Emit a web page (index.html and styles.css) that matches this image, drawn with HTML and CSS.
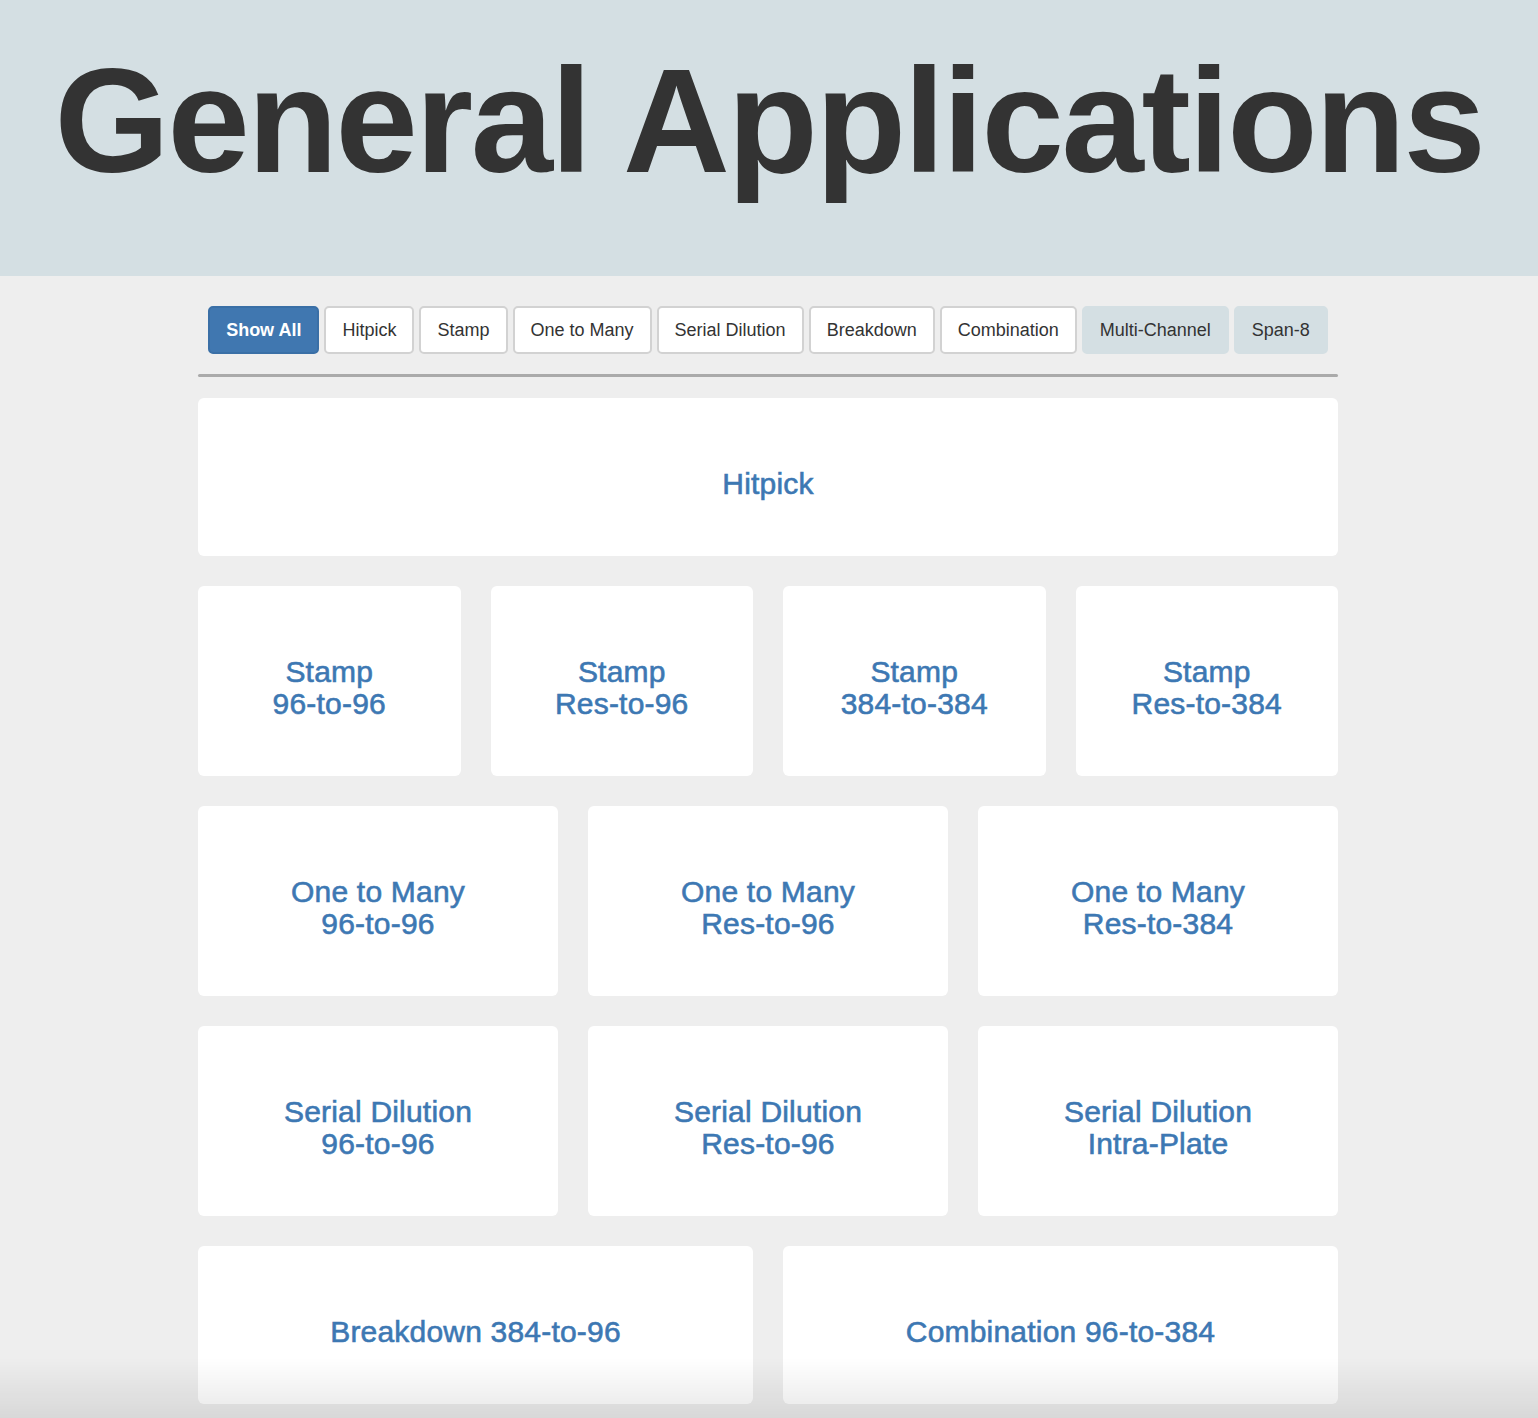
FILE: index.html
```html
<!DOCTYPE html>
<html>
<head>
<meta charset="utf-8">
<title>General Applications</title>
<link rel="stylesheet" href="styles.css">
</head>
<body>
<header class="hero">
  <h1 class="hero-title">General Applications</h1>
</header>
<main class="content">
  <nav class="filters">
    <button class="filter filter-active">Show All</button>
    <button class="filter">Hitpick</button>
    <button class="filter">Stamp</button>
    <button class="filter">One to Many</button>
    <button class="filter">Serial Dilution</button>
    <button class="filter">Breakdown</button>
    <button class="filter">Combination</button>
    <button class="filter filter-muted">Multi-Channel</button>
    <button class="filter filter-muted">Span-8</button>
  </nav>
  <div class="divider"></div>
  <section class="cards">
    <div class="row row-short">
      <a class="card">Hitpick</a>
    </div>
    <div class="row">
      <a class="card">Stamp<br>96-to-96</a>
      <a class="card">Stamp<br>Res-to-96</a>
      <a class="card">Stamp<br>384-to-384</a>
      <a class="card">Stamp<br>Res-to-384</a>
    </div>
    <div class="row">
      <a class="card">One to Many<br>96-to-96</a>
      <a class="card">One to Many<br>Res-to-96</a>
      <a class="card">One to Many<br>Res-to-384</a>
    </div>
    <div class="row">
      <a class="card">Serial Dilution<br>96-to-96</a>
      <a class="card">Serial Dilution<br>Res-to-96</a>
      <a class="card">Serial Dilution<br>Intra-Plate</a>
    </div>
    <div class="row row-short">
      <a class="card">Breakdown 384-to-96</a>
      <a class="card">Combination 96-to-384</a>
    </div>
  </section>
</main>
<div class="bottom-fade"></div>
</body>
</html>
```

FILE: styles.css
```css
html, body {
  margin: 0;
  padding: 0;
}
body {
  background: #eeeeee;
  font-family: "Liberation Sans", Arial, Helvetica, sans-serif;
  color: #333333;
  min-height: 1450px;
}
.hero {
  background: #d4dfe3;
  height: 276px;
  box-sizing: border-box;
  padding-top: 47px;
  text-align: center;
}
.hero-title {
  margin: 0;
  font-size: 148px;
  line-height: 148px;
  font-weight: 700;
  color: #333333;
  letter-spacing: -2.3px;
}
.content {
  width: 1140px;
  margin: 30px auto 0;
  position: relative;
  left: -1px;
}
.filters {
  display: flex;
  justify-content: center;
  gap: 5px;
}
.filter {
  font-family: "Liberation Sans", Arial, Helvetica, sans-serif;
  font-size: 18px;
  color: #333333;
  background: #ffffff;
  border: 2px solid #d2d2d2;
  border-radius: 5px;
  height: 48px;
  padding: 0 16px;
  cursor: pointer;
}
.filter-active {
  background: #4077b0;
  border-color: #3a6fa6;
  color: #ffffff;
  font-weight: 700;
}
.filter-muted {
  background: #d4dfe3;
  border-color: #d4dfe3;
}
.divider {
  height: 3px;
  background: #aaaaaa;
  border-radius: 2px;
  margin: 20px 0 21px;
}
.cards {
  display: flex;
  flex-direction: column;
  gap: 30px;
}
.row {
  display: flex;
  gap: 30px;
  height: 190px;
}
.row-short {
  height: 158px;
}
.card {
  flex: 1;
  background: #ffffff;
  border-radius: 6px;
  display: flex;
  align-items: center;
  justify-content: center;
  text-align: center;
  box-sizing: border-box;
  padding-top: 14px;
  font-size: 30px;
  line-height: 32px;
  letter-spacing: 0.2px;
  color: #3d78b3;
  -webkit-text-stroke: 0.6px #3d78b3;
  text-decoration: none;
}
.bottom-fade {
  position: fixed;
  left: 0;
  right: 0;
  bottom: 0;
  height: 60px;
  background: linear-gradient(to bottom, rgba(0,0,0,0), rgba(0,0,0,0.09));
  pointer-events: none;
}
```
